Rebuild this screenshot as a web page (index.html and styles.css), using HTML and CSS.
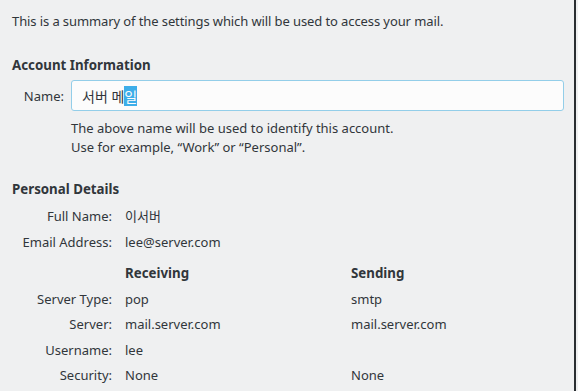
FILE: index.html
```html
<!DOCTYPE html>
<html lang="en">
<head>
  <meta charset="UTF-8" />
  <title>Summary</title>
  <link rel="stylesheet" href="styles.css">
</head>
<body>
  <div class="page">
    <p class="intro">This is a summary of the settings which will be used to access your mail.</p>

    <!-- Account Information -->
    <h2>Account Information</h2>
    <div class="name-row">
      <label class="label name-label">Name:</label>
      <div class="name-field">서버 메<span class="sel">일</span></div>
    </div>
    <p class="hint">The above name will be used to identify this account.<br>Use for example, “Work” or “Personal”.</p>

    <!-- Personal Details -->
    <h2 class="second">Personal Details</h2>
    <div class="details">
      <span class="label">Full Name:</span><span>이서버</span><span></span>
      <span class="label">Email Address:</span><span>lee@server.com</span><span></span>
      <span></span><span class="col-head">Receiving</span><span class="col-head">Sending</span>
      <span class="label">Server Type:</span><span>pop</span><span>smtp</span>
      <span class="label">Server:</span><span>mail.server.com</span><span>mail.server.com</span>
      <span class="label">Username:</span><span>lee</span><span></span>
      <span class="label">Security:</span><span>None</span><span>None</span>
    </div>
  </div>
</body>
</html>
```

FILE: styles.css
```css
/* Página geral */
body {
  margin: 0;
  background-color: #eff0f1;
  color: #31363b;
  font-family: "Noto Sans", "Noto Sans CJK KR", sans-serif;
  font-size: 13px;
  overflow: hidden;
}

.page {
  width: 576px;
  height: 391px;
  border-right: 2px solid #2a2e32;
  padding: 12px 0 0 12px;
  box-sizing: border-box;
}

p {
  margin: 0;
}

.intro {
  line-height: 18px;
  letter-spacing: -0.1px;
}

h2 {
  font-size: 13.3px;
  font-weight: 700;
  margin: 26px 0 0 0;
  line-height: 18px;
}

h2.second {
  margin-top: 23px;
}

.label {
  text-align: right;
}

/* Campo do nome */
.name-row {
  display: flex;
  align-items: center;
  margin-top: 6px;
}

.name-label {
  width: 52px;
}

.name-field {
  margin-left: 7px;
  width: 493px;
  height: 31px;
  box-sizing: border-box;
  border: 1px solid #93cee9;
  border-radius: 3px;
  background-color: #fcfcfc;
  padding: 0 10px;
  display: flex;
  align-items: center;
  font-size: 14px;
}

.sel {
  background-color: #3daee9;
  color: #fcfcfc;
}

.hint {
  margin: 8px 0 0 59px;
  line-height: 19px;
}

/* Tabela de detalhes */
.details {
  display: grid;
  grid-template-columns: 100px 213px auto;
  column-gap: 13px;
  row-gap: 7.5px;
  margin-top: 9px;
  line-height: 18px;
}

.details .label {
  grid-column: 1;
}

.col-head {
  font-size: 13.3px;
  font-weight: 700;
  margin-top: 6px;
}
```
